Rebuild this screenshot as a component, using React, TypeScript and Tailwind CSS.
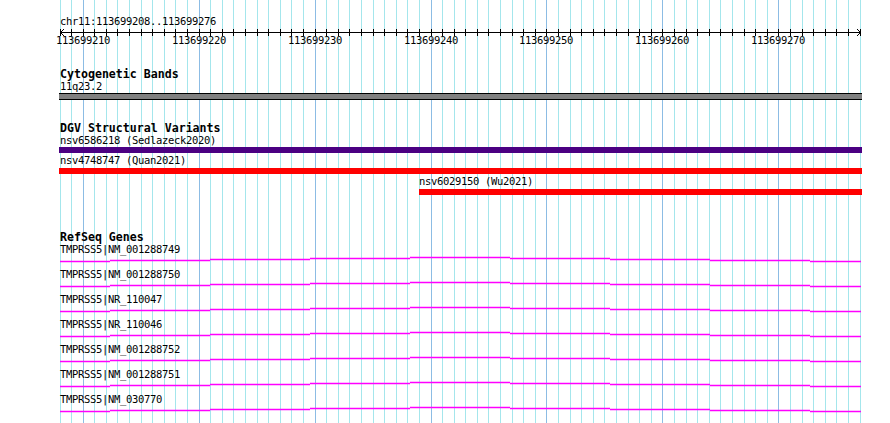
const BP = 800 / 69
const START = 113699208

const gridXs = Array.from({ length: 70 }, (_, k) => ({
  x: Math.floor(60 + k * BP) + 0.5,
  major: (START + k) % 10 === 0,
  pos: START + k,
}))

const genes = [
  'TMPRSS5|NM_001288749',
  'TMPRSS5|NM_001288750',
  'TMPRSS5|NR_110047',
  'TMPRSS5|NR_110046',
  'TMPRSS5|NM_001288752',
  'TMPRSS5|NM_001288751',
  'TMPRSS5|NM_030770',
]

// stepped intron line, offsets from the peak
const steps = [
  [60, 110, 4],
  [110, 210, 3],
  [210, 310, 2],
  [310, 410, 1],
  [410, 510, 0],
  [510, 610, 1],
  [610, 710, 2],
  [710, 810, 3],
  [810, 861, 4],
]

function Grid() {
  return (
    <svg className="absolute inset-0" width={890} height={423} shapeRendering="crispEdges">
      {gridXs.map((g) => (
        <line
          key={g.pos}
          x1={g.x}
          x2={g.x}
          y1={0}
          y2={423}
          stroke={g.major ? '#8cbce4' : '#a4e6ec'}
          strokeWidth={1}
        />
      ))}
    </svg>
  )
}

function Ruler() {
  return (
    <svg width={890} height={20} className="block">
      <g shapeRendering="crispEdges" stroke="#000" strokeWidth={1}>
        <line x1={60} x2={861} y1={4.5} y2={4.5} />
        {gridXs.map((g) => (
          <line key={g.pos} x1={g.x} x2={g.x} y1={1} y2={8} />
        ))}
      </g>
      <polyline points="64,1 60.5,4.5 64,8" fill="none" stroke="#000" strokeWidth={1} />
      <polyline points="857,1 860.5,4.5 857,8" fill="none" stroke="#000" strokeWidth={1} />
      {gridXs
        .filter((g) => g.major)
        .map((g) => (
          <text
            key={g.pos}
            x={g.x - 0.5}
            y={16}
            textAnchor="middle"
            fontSize={10.5}
            letterSpacing={-0.32}
            fontFamily="'DejaVu Sans Mono', monospace"
            fill="#000"
          >
            {g.pos}
          </text>
        ))}
    </svg>
  )
}

function GeneLine() {
  return (
    <svg width={890} height={12} className="block">
      {steps.map(([a, b, off]) => (
        <line key={a} x1={a} x2={b} y1={1.5 + off} y2={1.5 + off} stroke="#ff00ff" strokeWidth={1.5} />
      ))}
    </svg>
  )
}

export default function App() {
  const mono = "font-['DejaVu_Sans_Mono',monospace]"
  const small = 'text-[10.5px] tracking-[-0.32px] leading-[13px]'
  return (
    <div className={`relative w-[890px] h-[423px] overflow-hidden bg-white text-black ${mono}`}>
      <Grid />
      <div className="relative flex flex-col">
        <div className={`ml-[60px] mt-[15px] ${small}`}>chr11:113699208..113699276</div>
        <Ruler />

        <div className="ml-[60px] mt-[20px] text-[11.6px] leading-[12px] font-bold">Cytogenetic Bands</div>
        <div className={`ml-[60px] ${small}`}>11q23.2</div>
        <div className="ml-[59px] w-[803px] h-[7px] bg-[#808080] border-y border-black" />

        <div className="ml-[60px] mt-[22px] text-[11.6px] leading-[12px] font-bold">DGV Structural Variants</div>
        <div className={`ml-[60px] ${small}`}>nsv6586218 (Sedlazeck2020)</div>
        <div className="ml-[59px] w-[803px] h-[6px] bg-[#4b0082]" />
        <div className={`ml-[60px] mt-px ${small}`}>nsv4748747 (Quan2021)</div>
        <div className="ml-[59px] mt-px w-[803px] h-[6px] bg-[#ff0000]" />
        <div className={`ml-[419px] mt-px ${small}`}>nsv6029150 (Wu2021)</div>
        <div className="ml-[419px] mt-px w-[443px] h-[6px] bg-[#ff0000]" />

        <div className="ml-[60px] mt-[37px] text-[11.6px] leading-[11px] font-bold">RefSeq Genes</div>
        {genes.map((g) => (
          <div key={g} className="flex flex-col">
            <div className={`ml-[60px] ${small}`}>{g}</div>
            <GeneLine />
          </div>
        ))}
      </div>
    </div>
  )
}
